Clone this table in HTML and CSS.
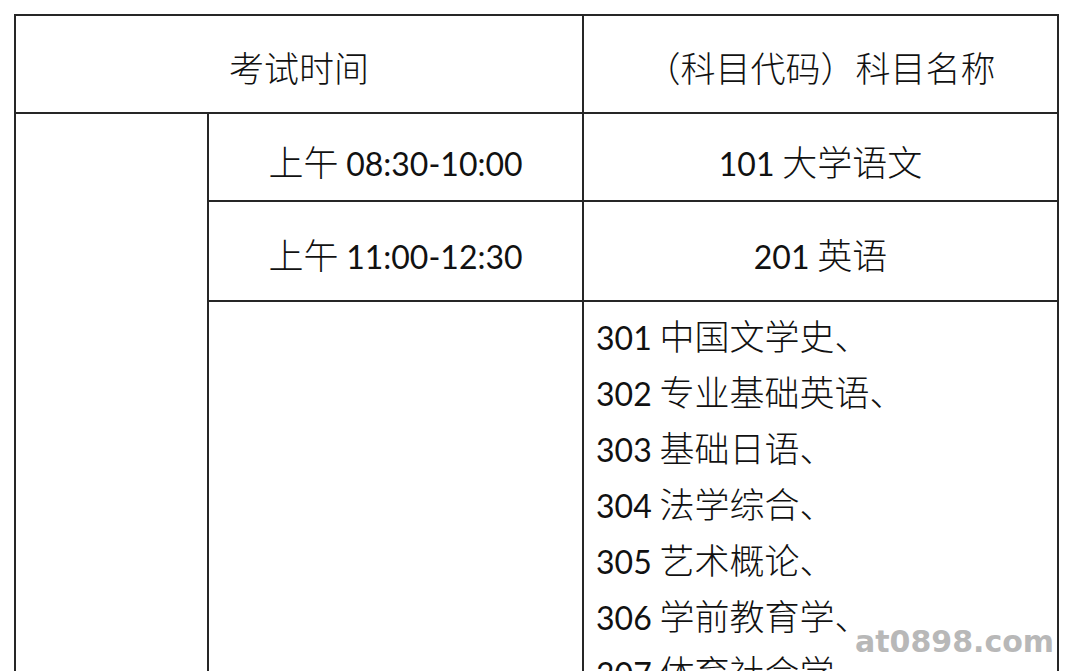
FILE: index.html
```html
<!DOCTYPE html>
<html lang="zh-CN">
<head>
<meta charset="utf-8">
<title>考试时间</title>
<link rel="stylesheet" href="styles.css">
</head>
<body>
<div class="page">
  <table class="schedule">
    <colgroup>
      <col class="c1">
      <col class="c2">
      <col class="c3">
    </colgroup>
    <tr class="head">
      <td colspan="2">考试时间</td>
      <td class="subj-head">（科目代码）科目名称</td>
    </tr>
    <tr class="r2">
      <td rowspan="3"></td>
      <td>上午 <span class="num">08:30-10:00</span></td>
      <td><span class="num">101</span> 大学语文</td>
    </tr>
    <tr class="r3">
      <td>上午 <span class="num">11:00-12:30</span></td>
      <td><span class="num">201</span> 英语</td>
    </tr>
    <tr class="r4">
      <td></td>
      <td class="list">
        <div class="line"><span class="num">301</span> 中国文学史、</div>
        <div class="line"><span class="num">302</span> 专业基础英语、</div>
        <div class="line"><span class="num">303</span> 基础日语、</div>
        <div class="line"><span class="num">304</span> 法学综合、</div>
        <div class="line"><span class="num">305</span> 艺术概论、</div>
        <div class="line"><span class="num">306</span> 学前教育学、</div>
        <div class="line"><span class="num">307</span> 体育社会学、</div>
        <div class="line"><span class="num">308</span> 管理学原理、</div>
      </td>
    </tr>
  </table>
  <div class="watermark">at0898.com</div>
</div>
</body>
</html>
```

FILE: styles.css
```css
html, body {
  margin: 0;
  padding: 0;
  background: #ffffff;
}
.page {
  position: relative;
  padding: 14px 0 0 14px;
  height: 671px;
  overflow: hidden;
  box-sizing: border-box;
}
.schedule {
  border-collapse: collapse;
  table-layout: fixed;
  width: 1045px;
  font-family: "Noto Sans CJK SC", sans-serif;
  font-weight: 300;
  font-size: 35px;
  color: #111;
}
.c1 { width: 193px; }
.c2 { width: 375px; }
.c3 { width: 475px; }
.schedule td {
  border: 2px solid #262626;
  padding: 0;
  text-align: center;
  vertical-align: middle;
  line-height: 40px;
}
.num {
  font-family: Lato, "Noto Sans CJK SC", sans-serif;
  font-weight: 400;
  font-size: 32px;
  line-height: 20px;
}
.head td {
  height: 98px;
  padding-top: 5px;
  box-sizing: border-box;
}
.subj-head {
  padding-left: 10px;
}
.r2 td {
  height: 88px;
  padding-top: 8px;
  box-sizing: border-box;
}
.r3 td {
  height: 100px;
  padding-top: 5px;
  box-sizing: border-box;
}
.r4 td {
  vertical-align: top;
}
.schedule td.list {
  text-align: left;
  padding: 5px 0 0 12px;
  vertical-align: top;
}
.line {
  line-height: 56px;
  white-space: nowrap;
}
.watermark {
  position: absolute;
  left: 855px;
  top: 624px;
  font-family: "DejaVu Sans", sans-serif;
  font-weight: bold;
  font-size: 30px;
  line-height: 36px;
  color: #b8b8b8;
}
```
